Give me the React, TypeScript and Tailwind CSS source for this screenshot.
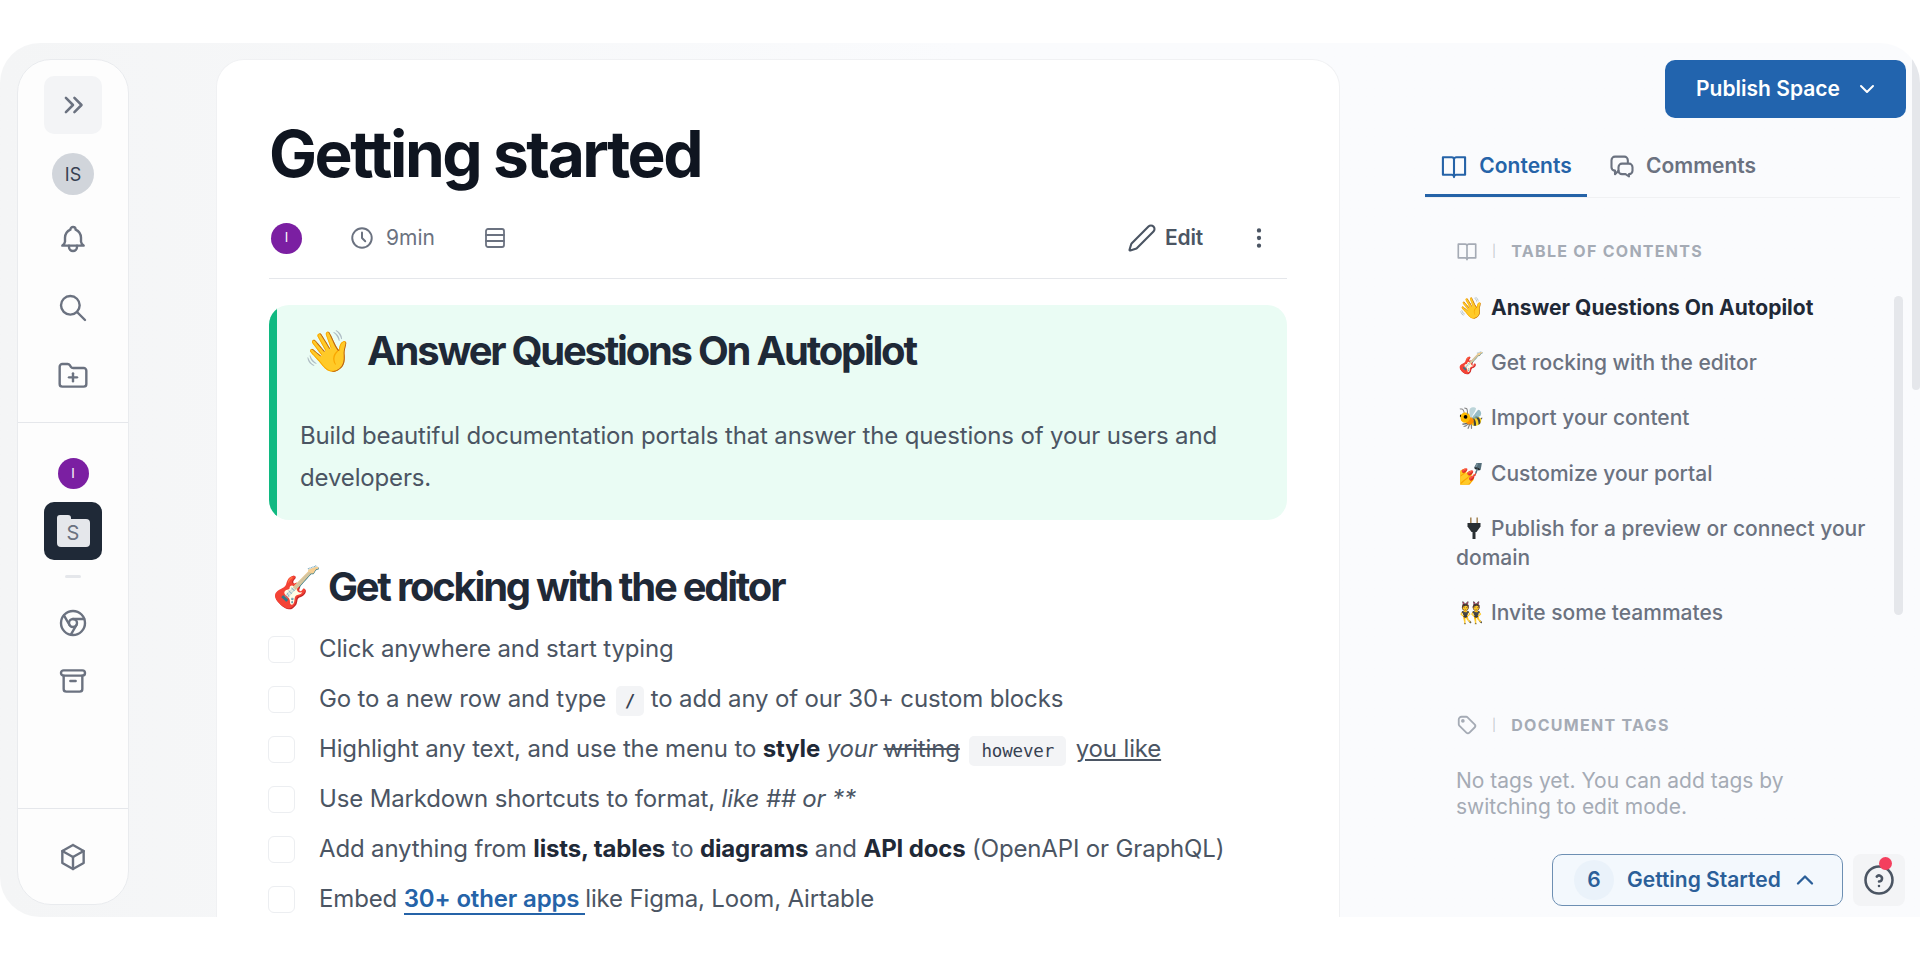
import { FolderPlus, Pen, Rows3 } from "lucide-react";
import {
  TbArchive,
  TbBell,
  TbBox,
  TbBrandChrome,
  TbChevronDown,
  TbChevronUp,
  TbChevronsRight,
  TbClock,
  TbDotsVertical,
  TbHelpCircle,
  TbSearch,
  TbTag,
} from "react-icons/tb";

function BookIcon({ className }: { className: string }) {
  return (
    <svg viewBox="0 0 24 24" fill="none" stroke="currentColor" strokeWidth="1.8" strokeLinejoin="round" className={className}>
      <path d="M12 6.5a2 2 0 0 1 2-2h7.5v15H14a2 2 0 0 0-2 2a2 2 0 0 0-2-2H2.5v-15H10a2 2 0 0 1 2 2zv15" />
    </svg>
  );
}

function CommentsIcon({ className }: { className: string }) {
  return (
    <svg viewBox="0 0 24 24" fill="none" stroke="currentColor" strokeWidth="1.8" strokeLinecap="round" strokeLinejoin="round" className={className}>
      <path d="M17 9V7a3 3 0 0 0-3-3H6a3 3 0 0 0-3 3v6a3 3 0 0 0 3 3v3l3-3" />
      <path d="M12 10h6a3 3 0 0 1 3 3v3a3 3 0 0 1-3 3v2l-3-2h-3a3 3 0 0 1-3-3v-3a3 3 0 0 1 3-3z" />
    </svg>
  );
}

function PlugEmoji() {
  return (
    <svg viewBox="0 0 24 24" className="mr-[5px] ml-[6px] inline-block h-[24px] w-[24px] align-[-4px]">
      <path d="M8 1.5h1.6v6H8zM14.4 1.5H16v6h-1.6z" fill="#a8895c" />
      <path d="M5.5 7h13v3.5L14.5 16h-5L5.5 10.5z" fill="#292f33" />
      <path d="M10.5 16h3v7h-3z" fill="#292f33" />
    </svg>
  );
}

function Avatar({ className }: { className: string }) {
  return <div className={`flex items-center justify-center rounded-full bg-[#7b1fa2] text-white ${className}`}>I</div>;
}

function Sidebar() {
  return (
    <aside className="mt-4 ml-[17px] flex h-[846px] w-[112px] shrink-0 flex-col items-center rounded-[34px] border border-[#e9ebee] bg-[#fdfdfd] text-[#6b7280]">
      <div className="mt-4 flex h-[58px] w-[58px] items-center justify-center rounded-[10px] bg-[#f3f4f6]">
        <TbChevronsRight className="h-[34px] w-[34px]" strokeWidth={1.8} />
      </div>
      <div className="mt-[19px] flex h-[42px] w-[42px] items-center justify-center rounded-full bg-[#d1d5db] text-[18px] text-[#374151]">IS</div>
      <TbBell className="mt-[28px] h-[32px] w-[32px]" strokeWidth={1.8} />
      <TbSearch className="mt-[37px] h-[32px] w-[32px]" strokeWidth={1.8} />
      <FolderPlus className="mt-[36px] h-[32px] w-[32px]" strokeWidth={1.8} />
      <div className="mt-[30px] h-px w-full bg-[#e5e7eb]" />
      <Avatar className="mt-[35px] h-[31px] w-[31px] text-[13px]" />
      <div className="mt-[13px] flex h-[58px] w-[58px] items-center justify-center rounded-[10px] bg-[#1f2937]">
        <div className="relative mt-1 flex h-[28px] w-[33px] items-center justify-center rounded-[4px] bg-[#e5e7eb] text-[20px] leading-none text-[#6b7280]">
          <div className="absolute -top-[4px] left-0 h-[8px] w-[14px] rounded-t-[3px] bg-[#e5e7eb]" />
          <span className="relative">S</span>
        </div>
      </div>
      <div className="mt-[15px] h-[3px] w-[16px] rounded-full bg-[#e5e7eb]" />
      <TbBrandChrome className="mt-[29px] h-[32px] w-[32px]" strokeWidth={1.8} />
      <TbArchive className="mt-[26px] h-[32px] w-[32px]" strokeWidth={1.8} />
      <div className="mt-auto h-px w-full bg-[#e5e7eb]" />
      <TbBox className="mt-[32px] mb-[31px] h-[32px] w-[32px]" strokeWidth={1.8} />
    </aside>
  );
}

function Check({ children }: { children: React.ReactNode }) {
  return (
    <div className="flex h-[50px] items-center">
      <div className="mt-[1px] -ml-[1px] h-[27px] w-[27px] shrink-0 rounded-[6px] border border-[#eceef1] bg-white" />
      <div className="ml-[24px] whitespace-nowrap text-[#4b5563]">{children}</div>
    </div>
  );
}

const codeClass = "rounded-[5px] bg-[#f3f4f6] py-[5px] font-['DejaVu_Sans_Mono',monospace] text-[17.5px] text-[#374151]";

function Main() {
  return (
    <main className="mt-4 ml-[87px] w-[1124px] shrink-0 rounded-t-[28px] border border-b-0 border-[#f0f1f3] bg-white px-[52px]">
      <h1 className="mt-[58px] text-[64px] leading-[72px] font-bold tracking-[-2.45px] text-[#0f1520]">Getting started</h1>
      <div className="mt-[29px] flex h-[60px] items-center border-b border-[#e5e7eb] pb-[21px] text-[#6b7280]">
        <Avatar className="ml-[2px] h-[31px] w-[31px] text-[13px]" />
        <TbClock className="ml-[47px] h-[26px] w-[26px]" strokeWidth={1.8} />
        <span className="ml-[11px] text-[21px] text-[#6b7280]">9min</span>
        <Rows3 className="ml-[48px] h-[24px] w-[24px]" strokeWidth={1.8} />
        <Pen className="ml-auto h-[30px] w-[30px] text-[#4b5563]" strokeWidth={1.7} />
        <span className="ml-[8px] text-[21px] font-semibold tracking-[-0.2px] text-[#4b5563]">Edit</span>
        <TbDotsVertical className="mr-[15px] ml-[43px] h-[26px] w-[26px] text-[#4b5563]" />
      </div>
      <section className="mt-[26px] flex h-[215px] overflow-hidden rounded-[20px] bg-[#eafcf4]">
        <div className="w-[8px] shrink-0 bg-[#10b981]" />
        <div className="pt-[18px] pl-[23px]">
          <div className="flex items-center pl-[3px] text-[40px] leading-[56px] font-bold tracking-[-2.25px] text-[#1f2937]">
            <span className="w-[64px] tracking-normal">👋</span>
            Answer Questions On Autopilot
          </div>
          <p className="mt-[36px] w-[960px] text-[24px] leading-[42px] tracking-[-0.15px] text-[#4b5563]">
            Build beautiful documentation portals that answer the questions of your users and developers.
          </p>
        </div>
      </section>
      <h2 className="mt-[39px] flex items-center text-[40px] leading-[56px] font-bold tracking-[-2.25px] text-[#1f2937]">
        <span className="ml-[3px] w-[56px] tracking-normal">🎸</span>
        Get rocking with the editor
      </h2>
      <div className="mt-[9px] text-[24px] tracking-[-0.15px]">
        <Check>Click anywhere and start typing</Check>
        <Check>
          Go to a new row and type <code className={`${codeClass} ml-[3px] px-[9px] font-bold`}>/</code> to add any of our 30+ custom blocks
        </Check>
        <Check>
          Highlight any text, and use the menu to <b className="font-bold text-[#1f2937]">style</b> <i>your</i> <s>writing</s>{" "}
          <code className={`${codeClass} mx-[3px] px-[12px]`}>however</code> <u>you like</u>
        </Check>
        <Check>
          Use Markdown shortcuts to format, <i>like ## or **</i>
        </Check>
        <Check>
          Add anything from <b className="font-bold text-[#1f2937]">lists, tables</b> to{" "}
          <b className="font-bold text-[#1f2937]">diagrams</b> and <b className="font-bold text-[#1f2937]">API docs</b> (OpenAPI or GraphQL)
        </Check>
        <Check>
          Embed <a className="border-b-2 border-[#2563a8] font-semibold text-[#2563a8]">30+ other apps </a>like Figma, Loom, Airtable
        </Check>
      </div>
    </main>
  );
}

function Emoji({ children }: { children: React.ReactNode }) {
  return <span className="inline-block w-[35px] pl-[2px]">{children}</span>;
}

function TocItem({ emoji, label, gap = "mt-[26px]" }: { emoji: React.ReactNode; label: string; gap?: string }) {
  return (
    <div className={`${gap} text-[21px] leading-[29px] font-medium text-[#6b7280]`}>
      {emoji}
      {label}
    </div>
  );
}

function RightPanel() {
  return (
    <div className="relative flex min-w-0 flex-1 flex-col">
      <button className="mt-[17px] mr-[14px] flex h-[58px] w-[241px] shrink-0 items-center justify-center gap-[15px] self-end rounded-[10px] bg-[#2264ae] pl-[4px] text-[21px] font-semibold text-white">
        Publish Space
        <TbChevronDown className="h-[24px] w-[24px]" />
      </button>
      <div className="mt-[25px] mr-[20px] ml-[85px] flex h-[55px] shrink-0 border-b border-[#f0f1f3] text-[21px] font-semibold">
        <div className="flex w-[162px] items-center justify-center gap-[11px] border-b-[3px] border-[#2563a8] pb-[5px] text-[#2563a8]">
          <BookIcon className="h-[28px] w-[28px]" />
          Contents
        </div>
        <div className="ml-[21px] flex items-center gap-[10px] pb-[8px] text-[#6b7280]">
          <CommentsIcon className="h-[28px] w-[28px]" />
          Comments
        </div>
      </div>
      <div className="mt-[40px] ml-[116px] w-[430px]">
        <div className="flex h-[26px] items-center text-[16px] font-bold tracking-[0.08em] text-[#a5abb5]">
          <BookIcon className="h-[22px] w-[22px]" />
          <span className="mx-[14px] text-[12px] font-normal text-[#c4c8ce]">|</span>
          TABLE OF CONTENTS
        </div>
        <div className="mt-[29px] text-[21px] leading-[29px] font-bold text-[#1f2937]">
          <Emoji>👋</Emoji>Answer Questions On Autopilot
        </div>
        <TocItem emoji={<Emoji>🎸</Emoji>} label="Get rocking with the editor" />
        <TocItem emoji={<Emoji>🐝</Emoji>} label="Import your content" />
        <TocItem emoji={<Emoji>💅</Emoji>} label="Customize your portal" gap="mt-[27px]" />
        <TocItem emoji={<PlugEmoji />} label="Publish for a preview or connect your domain" />
        <TocItem emoji={<Emoji>👯</Emoji>} label="Invite some teammates" />
      </div>
      <div className="absolute top-[253px] right-[17px] h-[319px] w-[9px] rounded-full bg-[#e5e7eb]" />
      <div className="absolute top-0 right-0 h-[347px] w-[8px] rounded-full bg-[#e5e7eb]" />
      <div className="mt-[85px] ml-[116px] w-[430px]">
        <div className="flex h-[26px] items-center text-[16px] font-bold tracking-[0.08em] text-[#a5abb5]">
          <TbTag className="h-[22px] w-[22px]" />
          <span className="mx-[14px] text-[12px] font-normal text-[#c4c8ce]">|</span>
          DOCUMENT TAGS
        </div>
        <p className="mt-[30px] w-[400px] text-[21px] leading-[26px] text-[#a5abb5]">No tags yet. You can add tags by switching to edit mode.</p>
      </div>
      <div className="mt-[34px] mr-[15px] flex justify-end gap-[10px]">
        <div className="flex h-[52px] w-[291px] items-center rounded-[10px] border border-[#6d8fb3] bg-[#f3f8fd] text-[21px] font-semibold text-[#2b5f99]">
          <span className="ml-[21px] flex h-[40px] w-[40px] items-center justify-center rounded-full bg-[#eaf2fa]">6</span>
          <span className="ml-[13px] whitespace-nowrap">Getting Started</span>
          <TbChevronUp className="ml-[10px] h-[28px] w-[28px]" />
        </div>
        <div className="relative flex h-[52px] w-[52px] items-center justify-center rounded-[8px] bg-[#f3f4f6] text-[#4b5563]">
          <TbHelpCircle className="h-[36px] w-[36px]" strokeWidth={1.7} />
          <div className="absolute top-[3px] right-[13px] h-[13px] w-[13px] rounded-full bg-[#f43f5e]" />
        </div>
      </div>
    </div>
  );
}

export default function App() {
  return (
    <div className="h-[960px] overflow-hidden bg-white pt-[43px] font-['Inter',sans-serif]">
      <div className="flex h-[874px] overflow-hidden rounded-t-[40px] rounded-bl-[40px] bg-gradient-to-r from-[#f4f5f6] via-[#fafbfd] to-[#fafbfd]">
        <Sidebar />
        <Main />
        <RightPanel />
      </div>
    </div>
  );
}
